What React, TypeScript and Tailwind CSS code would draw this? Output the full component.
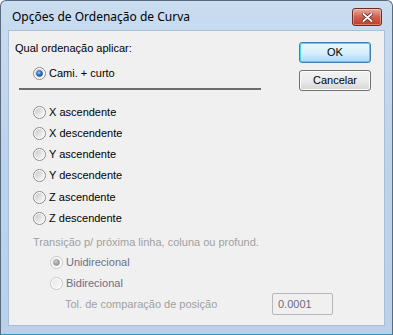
import React from "react";

type RadioProps = { checked?: boolean; disabled?: boolean; id: string };

function Radio({ checked, disabled, id }: RadioProps) {
  const stroke = disabled ? "#c4c4c4" : "#8a8a8a";
  return (
    <svg width="13" height="13" viewBox="0 0 13 13" className="shrink-0">
      <defs>
        <linearGradient id={`g-${id}`} x1="0" y1="0" x2="1" y2="1">
          <stop offset="0" stopColor={disabled ? "#e8e8e8" : "#c9c9c9"} />
          <stop offset="1" stopColor={disabled ? "#f8f8f8" : "#fbfbfb"} />
        </linearGradient>
        <radialGradient id={`d-${id}`} cx="0.4" cy="0.35" r="0.7">
          <stop offset="0" stopColor={disabled ? "#d8d8d8" : "#9bd3ff"} />
          <stop offset="0.5" stopColor={disabled ? "#a8a8a8" : "#2b7fd4"} />
          <stop offset="1" stopColor={disabled ? "#8f8f8f" : "#0b3e86"} />
        </radialGradient>
      </defs>
      <circle cx="6.5" cy="6.5" r="6" fill="#fff" stroke={stroke} strokeWidth="1" />
      <circle cx="6.5" cy="6.5" r="4.5" fill={`url(#g-${id})`} />
      {checked && (
        <circle
          cx="6.5"
          cy="6.5"
          r="3"
          fill={`url(#d-${id})`}
          stroke={disabled ? "#9a9a9a" : "#1d4f8f"}
          strokeWidth="0.6"
        />
      )}
    </svg>
  );
}

function RadioRow({ label, id, tall }: { label: string; id: string; tall?: boolean }) {
  return (
    <div className={`flex items-center gap-[3px] pl-[24px] ${tall ? "h-[22px]" : "h-[21px]"}`}>
      <Radio id={id} />
      <span className="text-black">{label}</span>
    </div>
  );
}

export default function App() {
  const options = [
    "X ascendente",
    "X descendente",
    "Y ascendente",
    "Y descendente",
    "Z ascendente",
    "Z descendente",
  ];
  return (
    <div
      className="h-[335px] w-[393px] overflow-hidden bg-white"
      style={{ fontFamily: "'Liberation Sans', Arial, sans-serif" }}
    >
      <div className="flex h-full w-full flex-col rounded-t-[6px] border border-[#5a6b80] border-b-[#2f8fbf] bg-gradient-to-b from-[#c9dcf0] via-[#bcd3ec] to-[#b9d1ea]">
        {/* Title bar */}
        <div className="flex h-[29px] shrink-0 items-center justify-between pl-[11px] pr-[10px] pt-[3px]">
          <span
            className="text-[12px] text-black"
            style={{ fontFamily: "'Noto Sans', 'Liberation Sans', sans-serif" }}
          >
            Opções de Ordenação de Curva
          </span>
          <div className="flex h-[18px] w-[30px] items-center justify-center rounded-[3px] border border-[#6e2a24] bg-gradient-to-b from-[#e9a99c] via-[#d0614f] to-[#c23a22] shadow-[inset_0_0_0_1px_rgba(255,255,255,0.35)]">
            <svg width="11" height="9" viewBox="0 0 11 9">
              <path
                d="M1.5 1 L9.5 8 M9.5 1 L1.5 8"
                stroke="#4a1a14"
                strokeWidth="3.4"
                strokeLinecap="round"
              />
              <path
                d="M1.5 1 L9.5 8 M9.5 1 L1.5 8"
                stroke="#ffffff"
                strokeWidth="2"
                strokeLinecap="round"
              />
            </svg>
          </div>
        </div>
        {/* Client area */}
        <div className="mx-[7px] flex flex-1 border border-[#a9bfd6] bg-[#f0f0f0] text-[11px]">
          <div className="flex min-w-0 flex-1 flex-col">
            <div className="mt-[9px] flex h-[16px] items-center pl-[6px]">
              Qual ordenação aplicar:
            </div>
            <div className="mt-[9px] flex h-[16px] items-center gap-[3px] pl-[24px]">
              <Radio id="cami" checked />
              <span>Cami. + curto</span>
            </div>
            <div className="ml-[10px] mt-[7px] h-[2px] w-[242px] bg-[#6d6d6d]" />
            <div className="mt-[12px] flex flex-col">
              {options.map((o, i) => (
                <RadioRow key={o} id={`o${i}`} label={o} tall={i === 4} />
              ))}
            </div>
            <div className="mt-[5px] flex h-[16px] items-center whitespace-nowrap pl-[24px] text-[#a0a0a0]">
              Transição p/ próxima linha, coluna ou profund.
            </div>
            <div className="mt-[4px] flex h-[16px] items-center gap-[3px] pl-[41px] text-[#6e6e86]">
              <Radio id="uni" checked disabled />
              <span>Unidirecional</span>
            </div>
            <div className="mt-[5px] flex h-[16px] items-center gap-[3px] pl-[41px] text-[#6e6e86]">
              <Radio id="bi" disabled />
              <span>Bidirecional</span>
            </div>
            <div className="mt-[2px] flex items-center whitespace-nowrap pl-[56px]">
              <span className="w-[207px] shrink-0 text-[#a0a0a0]">
                Tol. de comparação de posição
              </span>
              <div className="flex h-[22px] w-[61px] shrink-0 items-center rounded-[2px] border border-[#b8b8b8] bg-[#f0f0f0] pl-[5px] text-[#6d6d7d]">
                0.0001
              </div>
            </div>
          </div>
          <div className="flex w-[85px] shrink-0 flex-col pt-[11px]">
            <button className="h-[21px] w-[72px] rounded-[3px] border border-[#3c7fb1] bg-gradient-to-b from-[#eaf6fd] via-[#d9f0fc] to-[#a7d9f5] text-[11px] text-black shadow-[inset_0_0_0_1px_#48d5f7]">
              OK
            </button>
            <button className="mt-[7px] h-[21px] w-[72px] rounded-[3px] border border-[#707070] bg-gradient-to-b from-[#f2f2f2] via-[#ebebeb] to-[#d5d5d5] text-[11px] text-black shadow-[inset_0_0_0_1px_#fcfcfc]">
              Cancelar
            </button>
          </div>
        </div>
        <div className="h-[8px] shrink-0" />
      </div>
    </div>
  );
}
